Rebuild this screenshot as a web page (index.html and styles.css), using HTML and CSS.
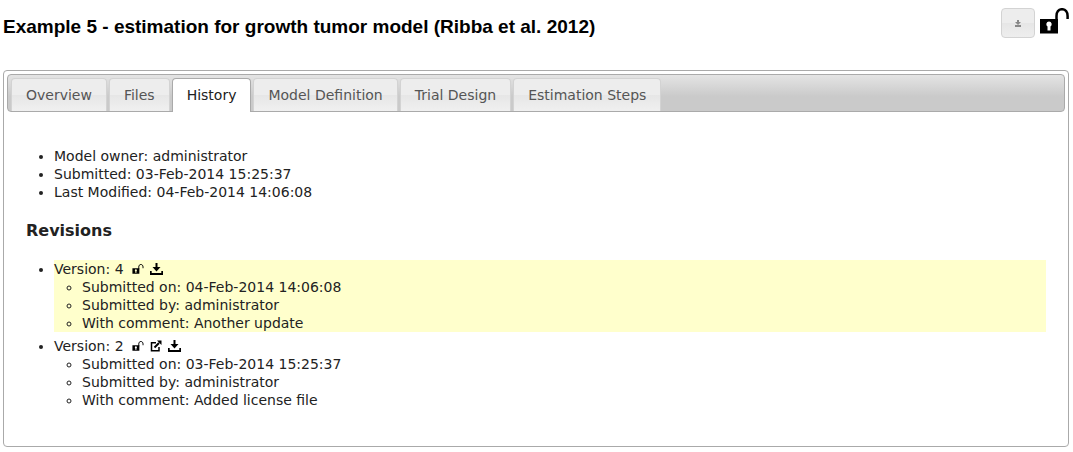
FILE: index.html
```html
<!DOCTYPE html>
<html lang="en">
<head>
<meta charset="utf-8">
<title>Example 5 - estimation for growth tumor model</title>
<link rel="stylesheet" href="styles.css">
</head>
<body>
<svg class="symbols" aria-hidden="true">
  <symbol id="unlock" viewBox="0 0 29 26">
    <path d="M16.5 14V8C16.5 4 18.5 1.2 22 1.2S27.6 4 27.6 8V11" fill="none" stroke="currentColor" stroke-width="2.5"/>
    <path fill="currentColor" fill-rule="evenodd" d="M0 11H18V25.500H0ZM9 13.500A2.800 2.800 0 0 0 7.500 18.600V22.500H10.500V18.600A2.800 2.800 0 0 0 9 13.500Z"/>
  </symbol>
  <symbol id="download" viewBox="0 0 13 12">
    <path fill="currentColor" d="M5.500 0H7.500V4H10.500L6.500 8.500L2.500 4H5.500ZM0 8H1.700V10H11.300V8H13V12H0Z"/>
  </symbol>
  <symbol id="edit" viewBox="0 0 12 12">
    <path d="M6 2.700H1.500V10.800H9V7" fill="none" stroke="currentColor" stroke-width="1.500"/>
    <path d="M4.500 7.500L9 3" fill="none" stroke="currentColor" stroke-width="2"/>
    <path fill="currentColor" d="M7 .5H11.500V5Z"/>
  </symbol>
</svg>
<header class="header">
  <h1 class="title">Example 5 - estimation for growth tumor model (Ribba et al. 2012)</h1>
  <div class="actions">
    <button class="download-button" type="button" aria-label="Download"><svg class="mini" viewBox="0 0 6 7"><path fill="currentColor" d="M2 0H4V2H6L3 5L0 2H2ZM0 5H6V7H0Z"/></svg></button>
    <svg class="lock" role="img" aria-label="Unlocked"><use href="#unlock"/></svg>
  </div>
</header>
<main class="panel">
  <nav class="tabs">
    <a class="tab" href="#overview">Overview</a>
    <a class="tab" href="#files">Files</a>
    <a class="tab active" href="#history" aria-current="page">History</a>
    <a class="tab" href="#definition">Model Definition</a>
    <a class="tab" href="#design">Trial Design</a>
    <a class="tab" href="#steps">Estimation Steps</a>
  </nav>
  <section class="content" id="history">
    <ul class="list">
      <li>Model owner: administrator</li>
      <li>Submitted: 03-Feb-2014 15:25:37</li>
      <li>Last Modified: 04-Feb-2014 14:06:08</li>
    </ul>
    <h2 class="subtitle">Revisions</h2>
    <ul class="list revisions">
      <li class="current">
        <div class="version">Version: 4
          <span class="icons">
            <svg class="icon-unlock" role="img" aria-label="Unlocked"><use href="#unlock"/></svg>
            <a class="icon-link" href="#download-4" aria-label="Download"><svg class="icon-download"><use href="#download"/></svg></a>
          </span>
        </div>
        <ul class="list">
          <li>Submitted on: 04-Feb-2014 14:06:08</li>
          <li>Submitted by: administrator</li>
          <li>With comment: Another update</li>
        </ul>
      </li>
      <li>
        <div class="version">Version: 2
          <span class="icons">
            <svg class="icon-unlock" role="img" aria-label="Unlocked"><use href="#unlock"/></svg>
            <a class="icon-link" href="#open-2" aria-label="Open"><svg class="icon-edit"><use href="#edit"/></svg></a>
            <a class="icon-link" href="#download-2" aria-label="Download"><svg class="icon-download"><use href="#download"/></svg></a>
          </span>
        </div>
        <ul class="list">
          <li>Submitted on: 03-Feb-2014 15:25:37</li>
          <li>Submitted by: administrator</li>
          <li>With comment: Added license file</li>
        </ul>
      </li>
    </ul>
  </section>
</main>
</body>
</html>
```
FILE: styles.css
```css
* {
  box-sizing: border-box;
}

body {
  margin: 0;
  padding: 8px 4px 4px 3px;
  background: #fff;
  color: #222;
  font: 14px/18px "DejaVu Sans", Verdana, sans-serif;
}

.symbols {
  display: none;
}

.header {
  display: flex;
  justify-content: space-between;
  align-items: flex-start;
  margin-bottom: 32px;
}

.title {
  margin: 8px 0 0;
  color: #000;
  font: bold 19px/22px "Liberation Sans", Arial, sans-serif;
}

.actions {
  display: flex;
  gap: 5px;
}

.download-button {
  display: flex;
  align-items: center;
  justify-content: center;
  width: 34px;
  height: 30px;
  padding: 0;
  border: 1px solid #d3d3d3;
  border-radius: 4px;
  background: linear-gradient(#ededed 50%, #e6e6e6 50%, #eee);
  color: #888;
}

.mini {
  width: 6px;
  height: 7px;
}

.lock {
  width: 29px;
  height: 26px;
  color: #000;
}

.panel {
  padding: 3px;
  border: 1px solid #aaa;
  border-radius: 4px;
}

.tabs {
  display: flex;
  gap: 2px;
  padding: 3px 3px 0;
  border: 1px solid #aaa;
  border-radius: 4px;
  background: linear-gradient(#e4e4e4, #cacaca 60%, #cacaca);
}

.tab {
  padding: 7px 14px;
  border: 1px solid #d3d3d3;
  border-bottom: 0;
  border-radius: 4px 4px 0 0;
  background: linear-gradient(#ededed 50%, #e6e6e6 50%, #f0f0f0);
  color: #555;
  text-decoration: none;
}

.tab.active {
  margin-bottom: -1px;
  padding-bottom: 8px;
  border-color: #aaa;
  background: #fff;
  color: #212121;
}

.content {
  padding: 35px 19px 34px;
}

.list {
  margin: 0;
  padding-left: 28px;
}

.subtitle {
  margin: 20px 0 19px;
  font-size: 16px;
  line-height: 20px;
}

.revisions > li + li {
  margin-top: 5px;
}

.current {
  background: #ffffcc;
}

.version {
  display: flex;
  gap: 8px;
}

.icons {
  display: flex;
  align-items: center;
  gap: 6px;
  color: #000;
}

.icon-link {
  display: flex;
  color: inherit;
}

.icon-unlock {
  width: 12px;
  height: 10px;
}

.icon-download {
  width: 13px;
  height: 12px;
}

.icon-edit {
  width: 12px;
  height: 12px;
}
```
